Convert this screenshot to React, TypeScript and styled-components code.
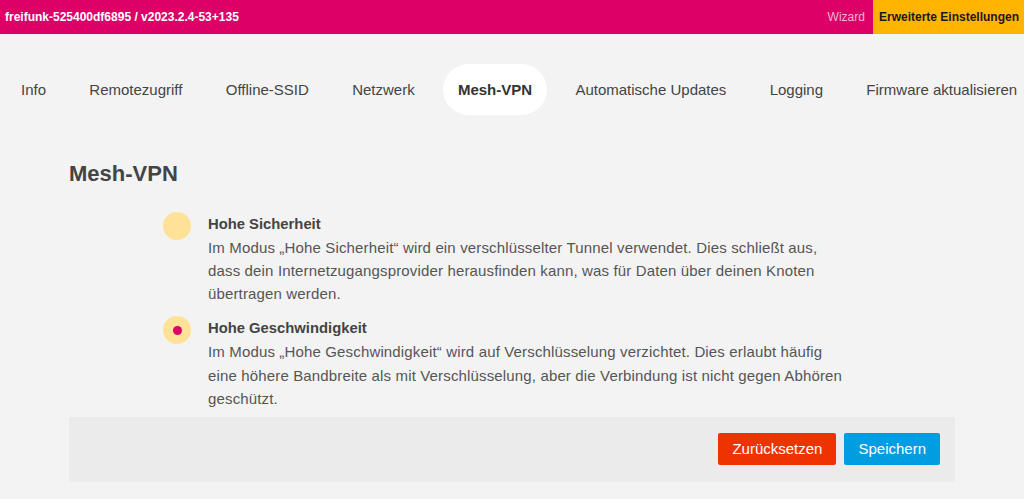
import React from "react";
import styled, { createGlobalStyle } from "styled-components";

const Global = createGlobalStyle`
  html, body { margin: 0; padding: 0; background: #f3f3f3; }
  body { font-family: "Liberation Sans", Arial, Helvetica, sans-serif; color: #4d4d4d; }
  * { box-sizing: border-box; }
`;

const Header = styled.header`
  display: flex;
  align-items: stretch;
  height: 34px;
  background: #dc0067;
  font-size: 12px;
`;

const Hostname = styled.div`
  flex: 1;
  display: flex;
  align-items: center;
  padding-left: 5px;
  color: #fff;
  font-weight: bold;
`;

const HeaderLink = styled.a<{ $active?: boolean }>`
  display: flex;
  align-items: center;
  padding: ${(p) => (p.$active ? "0 5px 0 6px" : "0 6px")};
  text-decoration: none;
  font-weight: ${(p) => (p.$active ? "bold" : "normal")};
  color: ${(p) => (p.$active ? "#1a1a1a" : "#f7b3d2")};
  background: ${(p) => (p.$active ? "#ffb400" : "transparent")};
  margin-left: ${(p) => (p.$active ? "2px" : "0")};
`;

const Tabs = styled.nav`
  display: flex;
  gap: 13.3px;
  padding: 30px 0 0 6px;
  white-space: nowrap;
`;

const Tab = styled.a<{ $active?: boolean }>`
  display: block;
  padding: 16px 15px;
  line-height: 19px;
  font-size: 15px;
  border-radius: 26px;
  text-decoration: none;
  color: ${(p) => (p.$active ? "#333" : "#444")};
  font-weight: ${(p) => (p.$active ? "bold" : "normal")};
  background: ${(p) => (p.$active ? "#fff" : "transparent")};
`;

const Main = styled.main`
  margin: 0 69px;
  padding-top: 46px;
`;

const Heading = styled.h2`
  margin: 0 0 26px;
  font-size: 22px;
  line-height: 26px;
  font-weight: bold;
  color: #444;
`;

const Options = styled.div`
  padding-left: 94px;
  display: flex;
  flex-direction: column;
  gap: 12px;
`;

const Option = styled.label`
  display: flex;
  align-items: flex-start;
  gap: 17px;
`;

const Radio = styled.span<{ $checked?: boolean }>`
  flex: none;
  width: 28px;
  height: 28px;
  margin-top: -1px;
  border-radius: 50%;
  background: #ffe197;
  display: flex;
  align-items: center;
  justify-content: center;
  &::after {
    content: "";
    width: 9px;
    height: 9px;
    border-radius: 50%;
    background: ${(p) => (p.$checked ? "#dc0067" : "transparent")};
  }
`;

const OptionText = styled.div`
  width: 645px;
  font-size: 15px;
  letter-spacing: 0.15px;
  line-height: 23.1px;
  color: #555;
`;

const OptionTitle = styled.div`
  font-weight: bold;
  font-size: 14.8px;
  letter-spacing: 0;
  color: #444;
`;

const ButtonBar = styled.div`
  margin-top: 7px;
  background: #ebebeb;
  display: flex;
  justify-content: flex-end;
  gap: 8px;
  padding: 16px 15px 17px;
`;

const Button = styled.button<{ $variant: "reset" | "save" }>`
  height: 32px;
  padding: 0 14px;
  border: none;
  border-radius: 2px;
  font-family: inherit;
  font-size: 15px;
  color: #fff;
  background: ${(p) => (p.$variant === "reset" ? "#ef3300" : "#009ee0")};
`;

const tabs = [
  "Info",
  "Remotezugriff",
  "Offline-SSID",
  "Netzwerk",
  "Mesh-VPN",
  "Automatische Updates",
  "Logging",
  "Firmware aktualisieren",
];

export default function App() {
  return (
    <>
      <Global />
      <Header>
        <Hostname>freifunk-525400df6895 / v2023.2.4-53+135</Hostname>
        <HeaderLink>Wizard</HeaderLink>
        <HeaderLink $active>Erweiterte Einstellungen</HeaderLink>
      </Header>
      <Tabs>
        {tabs.map((t) => (
          <Tab key={t} $active={t === "Mesh-VPN"}>
            {t}
          </Tab>
        ))}
      </Tabs>
      <Main>
        <Heading>Mesh-VPN</Heading>
        <Options>
          <Option>
            <Radio />
            <OptionText>
              <OptionTitle>Hohe Sicherheit</OptionTitle>
              Im Modus „Hohe Sicherheit“ wird ein verschlüsselter Tunnel verwendet. Dies schließt aus,
              dass dein Internetzugangsprovider herausfinden kann, was für Daten über deinen Knoten
              übertragen werden.
            </OptionText>
          </Option>
          <Option>
            <Radio $checked />
            <OptionText>
              <OptionTitle>Hohe Geschwindigkeit</OptionTitle>
              Im Modus „Hohe Geschwindigkeit“ wird auf Verschlüsselung verzichtet. Dies erlaubt häufig
              eine höhere Bandbreite als mit Verschlüsselung, aber die Verbindung ist nicht gegen Abhören
              geschützt.
            </OptionText>
          </Option>
        </Options>
        <ButtonBar>
          <Button $variant="reset">Zurücksetzen</Button>
          <Button $variant="save">Speichern</Button>
        </ButtonBar>
      </Main>
    </>
  );
}
